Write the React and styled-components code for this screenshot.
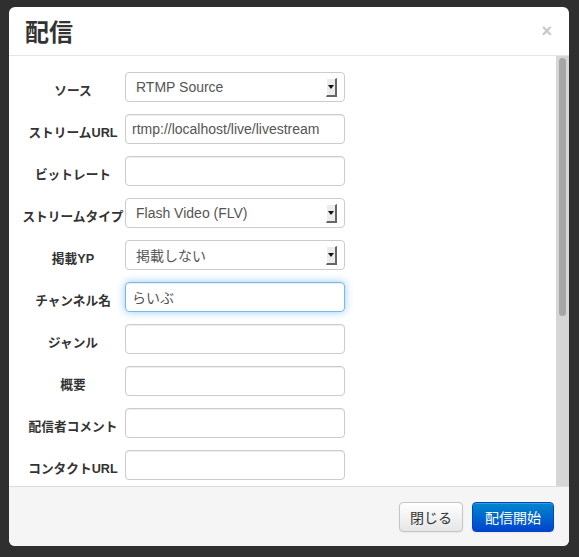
import React from 'react';
import styled, { createGlobalStyle } from 'styled-components';

const fields = [
  { label: 'ソース', type: 'select', value: 'RTMP Source' },
  { label: 'ストリームURL', type: 'input', value: 'rtmp://localhost/live/livestream' },
  { label: 'ビットレート', type: 'input', value: '' },
  { label: 'ストリームタイプ', type: 'select', value: 'Flash Video (FLV)' },
  { label: '掲載YP', type: 'select', value: '掲載しない' },
  { label: 'チャンネル名', type: 'input', value: 'らいぶ', focused: true },
  { label: 'ジャンル', type: 'input', value: '' },
  { label: '概要', type: 'input', value: '' },
  { label: '配信者コメント', type: 'input', value: '' },
  { label: 'コンタクトURL', type: 'input', value: '' },
];

const App = () => {
  return (
    <>
      <GlobalStyle />
      <Modal>
        <Header>
          <Title>配信</Title>
          <Close>×</Close>
        </Header>
        <Body>
          <Form>
            {fields.map((f) => (
              <Row key={f.label}>
                <Label>
                  <span>{f.label}</span>
                </Label>
                {f.type === 'select' ? (
                  <Select>
                    <span>{f.value}</span>
                    <Arrow>
                      <svg width="6" height="4" viewBox="0 0 6 4">
                        <path d="M0 0h6L3 4z" fill="#111" />
                      </svg>
                    </Arrow>
                  </Select>
                ) : (
                  <Input $focused={f.focused}>{f.value}</Input>
                )}
              </Row>
            ))}
          </Form>
          <Track>
            <Thumb />
          </Track>
        </Body>
        <Footer>
          <Button>閉じる</Button>
          <Button $primary>配信開始</Button>
        </Footer>
      </Modal>
    </>
  );
};

const GlobalStyle = createGlobalStyle`
  body {
    margin: 0;
    background: #2f2f2f;
    font-family: "Liberation Sans", "Noto Sans CJK JP", sans-serif;
  }
`;

const Modal = styled.div`
  width: 560px;
  margin: 7px 0 0 9px;
  background: #fff;
  border-radius: 6px;
  overflow: hidden;
`;

const Header = styled.div`
  height: 48px;
  display: flex;
  align-items: center;
  justify-content: space-between;
  padding: 0 16px;
  border-bottom: 1px solid #e5e5e5;
`;

const Title = styled.h3`
  margin: 0;
  font-size: 24px;
  font-weight: bold;
  color: #333;
  font-family: "Noto Sans CJK JP", sans-serif;
  line-height: 30px;
`;

const Close = styled.span`
  font-size: 18px;
  font-weight: bold;
  color: #c8c8c8;
  line-height: 20px;
  margin-right: 1px;
`;

const Body = styled.div`
  height: 430px;
  display: flex;
`;

const Form = styled.div`
  flex: 1;
  display: flex;
  flex-direction: column;
  gap: 12px;
  padding-top: 16px;
`;

const Row = styled.div`
  display: flex;
  align-items: flex-start;
`;

const Label = styled.label`
  flex: 0 0 104px;
  min-width: 0;
  margin-left: 12px;
  padding-top: 9px;
  display: flex;
  justify-content: center;
  white-space: nowrap;
  font-size: 12.7px;
  font-weight: bold;
  line-height: 20px;
  color: #333;
`;

const Field = styled.div`
  box-sizing: border-box;
  flex: 0 0 220px;
  height: 30px;
  border: 1px solid #ccc;
  border-radius: 4px;
  font-size: 14px;
  color: #555;
  display: flex;
  align-items: center;
  white-space: nowrap;
`;

const Input = styled(Field)`
  padding: 0 6px;
  border-color: ${(p) => (p.$focused ? 'rgba(82, 168, 236, 0.8)' : '#ccc')};
  box-shadow: ${(p) =>
    p.$focused
      ? 'inset 0 1px 1px rgba(0,0,0,.075), 0 0 8px rgba(82,168,236,.6)'
      : 'inset 0 1px 1px rgba(0,0,0,.075)'};
`;

const Select = styled(Field)`
  justify-content: space-between;
  padding: 0 7px 0 10px;
`;

const Arrow = styled.span`
  box-sizing: border-box;
  width: 11px;
  height: 19px;
  display: flex;
  align-items: center;
  justify-content: center;
  background: #ececec;
  border-right: 2px solid #666;
  border-bottom: 2px solid #666;
  border-top: 1px solid #fff;
  border-left: 1px solid #fff;
`;

const Track = styled.div`
  width: 13px;
  background: #d6d6d6;
  padding: 2px 3px 0;
  box-sizing: border-box;
`;

const Thumb = styled.div`
  width: 7px;
  height: 258px;
  border-radius: 4px;
  background: #a6a6a6;
`;

const Footer = styled.div`
  height: 59px;
  border-top: 1px solid #ddd;
  background: #f5f5f5;
  display: flex;
  align-items: center;
  justify-content: flex-end;
  gap: 9px;
  padding-right: 15px;
`;

const Button = styled.button`
  height: 30px;
  padding: 0 ${(p) => (p.$primary ? '12px' : '10px')};
  font-family: "Noto Sans CJK JP", sans-serif;
  font-size: 14px;
  border-radius: 4px;
  border: 1px solid ${(p) => (p.$primary ? '#0044cc' : '#c5c5c5')};
  color: ${(p) => (p.$primary ? '#fff' : '#333')};
  background: ${(p) =>
    p.$primary
      ? 'linear-gradient(#0088cc, #0044cc)'
      : 'linear-gradient(#ffffff, #e6e6e6)'};
  box-shadow: inset 0 1px 0 rgba(255,255,255,.2), 0 1px 2px rgba(0,0,0,.05);
`;

export default App;
